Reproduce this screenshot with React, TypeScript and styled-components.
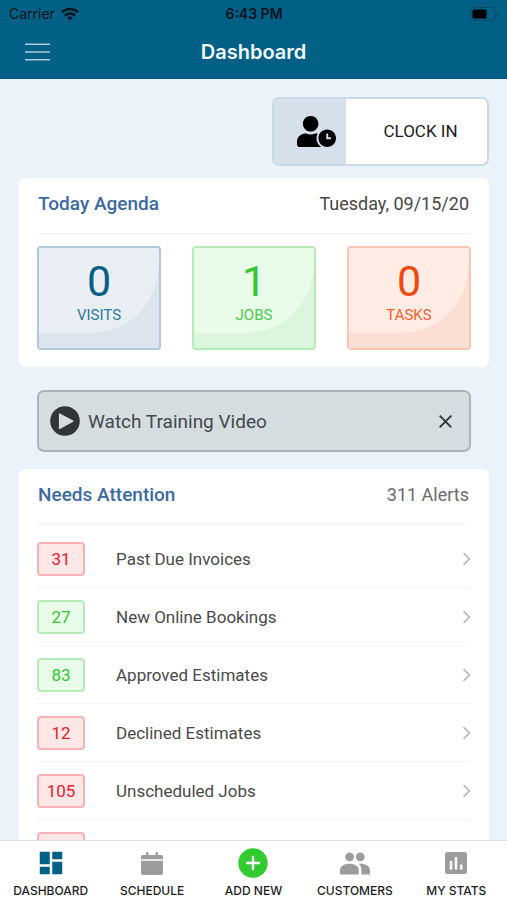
import React from "react";
import styled, { createGlobalStyle, css } from "styled-components";
import { FaUserClock } from "react-icons/fa";
import { MdDashboard } from "react-icons/md";

const GlobalStyle = createGlobalStyle`
  *, *::before, *::after { box-sizing: border-box; }
  body { margin: 0; background: #eaf3fa; font-family: Roboto, sans-serif; color: #444; }
  button { font: inherit; color: inherit; padding: 0; border: 0; background: none; cursor: pointer; }
  a { color: inherit; text-decoration: none; }
  h1, h2, p, ul { margin: 0; padding: 0; }
  svg { display: block; flex: none; }
`;

type Tone = "blue" | "green" | "orange" | "red";

const tones: Record<Tone, { ink: string; label: string; fill: string; shade: string; line: string }> = {
  blue: { ink: "#045f87", label: "#2c7898", fill: "#eaeff6", shade: "#dce4ed", line: "#b0c9d9" },
  green: { ink: "#32c832", label: "#4bcb4f", fill: "#e9fbe9", shade: "#dcf6dd", line: "#b6ebb8" },
  orange: { ink: "#f04a0c", label: "#f3632f", fill: "#feece5", shade: "#fcdfd4", line: "#fac6b2" },
  red: { ink: "#e8202a", label: "#e8202a", fill: "#fde7e7", shade: "#fbdada", line: "#f8b2b5" },
};

const Screen = styled.div`
  height: 100vh;
  display: flex;
  flex-direction: column;
`;

const TopBar = styled.header`
  flex: none;
  background: #025f86;
  border-bottom: 1px solid #01557a;
  font-family: Inter, sans-serif;
`;

const StatusBar = styled.div`
  display: grid;
  grid-template-columns: 1fr auto 1fr;
  align-items: center;
  height: 27px;
  padding: 0 8px 0 9px;
  font-size: 14px;
  color: #04141c;
`;

const Carrier = styled.div`
  display: flex;
  align-items: center;
  gap: 6px;
`;

const Clock = styled.div`
  font-weight: 600;
`;

const Battery = styled.div`
  justify-self: end;
`;

const TitleBar = styled.div`
  display: grid;
  grid-template-columns: 1fr auto 1fr;
  align-items: center;
  height: 51px;
  padding: 0 25px 2px;
`;

const MenuButton = styled.button`
  justify-self: start;
`;

const Title = styled.h1`
  font-size: 20px;
  line-height: 24px;
  font-weight: 600;
  color: #f2f8fb;
`;

const Content = styled.main`
  flex: 1;
  min-height: 0;
  overflow: hidden;
  padding: 18px 18px 0 19px;
`;

const ClockInButton = styled.button`
  display: flex;
  align-items: stretch;
  width: 217px;
  height: 69px;
  margin: 0 0 12px auto;
  border: 2px solid #c9d9e7;
  border-radius: 7px;
  background: #fff;
  overflow: hidden;
  font-size: 17px;
  color: #1c1c1c;
`;

const ClockInIcon = styled.span`
  display: flex;
  align-items: center;
  justify-content: center;
  width: 72px;
  padding-left: 12px;
  background: #d6e0ea;
  color: #000;
`;

const ClockInLabel = styled.span`
  flex: 1;
  align-self: center;
  padding: 0 0 2px 8px;
`;

const Card = styled.section`
  padding: 0 18px;
  background: #fff;
  border-radius: 6px;
`;

const CardHeader = styled.div`
  display: flex;
  align-items: center;
  justify-content: space-between;
  height: 56px;
  padding: 0 2px 4px 1px;
  border-bottom: 1px solid #f1f4f6;
`;

const CardTitle = styled.h2`
  font-size: 19px;
  line-height: 24px;
  font-weight: 500;
  color: #3b6ba0;
`;

const CardNote = styled.p<{ $strong?: boolean }>`
  font-size: 18px;
  line-height: 24px;
  color: ${(p) => (p.$strong ? "#474747" : "#6b6b6b")};
`;

const Tiles = styled.div`
  display: grid;
  grid-template-columns: repeat(3, 1fr);
  gap: 31px;
  padding: 12px 0 17px;
`;

const toneBox = css<{ $tone: Tone }>`
  color: ${(p) => tones[p.$tone].ink};
  background: ${(p) => tones[p.$tone].fill};
  border: 2px solid ${(p) => tones[p.$tone].line};
`;

const Tile = styled.button<{ $tone: Tone }>`
  ${toneBox}
  position: relative;
  display: flex;
  flex-direction: column;
  align-items: center;
  height: 104px;
  padding-top: 9px;
  border-radius: 4px;
  overflow: hidden;
`;

const TileShade = styled.svg`
  position: absolute;
  inset: 0;
  width: 100%;
  height: 100%;
`;

const TileCount = styled.span`
  position: relative;
  font-size: 43px;
  line-height: 48px;
`;

const TileLabel = styled.span<{ $tone: Tone }>`
  position: relative;
  font-size: 15px;
  line-height: 20px;
  color: ${(p) => tones[p.$tone].label};
`;

const Banner = styled.div`
  display: flex;
  align-items: center;
  justify-content: space-between;
  height: 62px;
  margin: 23px 18px 17px;
  padding: 0 17px 0 11px;
  background: #d6dde0;
  border: 2px solid #abb4b7;
  border-radius: 7px;
`;

const WatchButton = styled.button`
  display: flex;
  align-items: center;
  gap: 8px;
  font-size: 19px;
  color: #43484b;
`;

const AlertList = styled.ul`
  list-style: none;
  padding-top: 5px;
`;

const AlertItem = styled.li`
  border-bottom: 1px solid #f4f6f7;
`;

const AlertLink = styled.a`
  display: flex;
  align-items: center;
  height: 57px;
  font-size: 17px;
`;

const Badge = styled.span<{ $tone: Tone }>`
  ${toneBox}
  display: flex;
  align-items: center;
  justify-content: center;
  width: 48px;
  height: 34px;
  margin-right: 31px;
  border-radius: 4px;
`;

const AlertName = styled.span`
  flex: 1;
  color: #4a4a4a;
`;

const TabBar = styled.nav`
  flex: none;
  display: grid;
  grid-template-columns: repeat(5, 1fr);
  height: 60px;
  border-top: 1px solid #d9dfe3;
  background: #fff;
  font-family: Inter, sans-serif;
`;

const Tab = styled.a<{ $tint: string }>`
  display: flex;
  flex-direction: column;
  align-items: center;
  padding-top: 7px;
  gap: 5px;
  color: ${(p) => p.$tint};
`;

const TabIcon = styled.span`
  display: flex;
  align-items: center;
  justify-content: center;
  height: 30px;
`;

const TabLabel = styled.span`
  font-size: 12px;
  line-height: 16px;
  font-weight: 500;
  color: #1d1d1d;
  white-space: nowrap;
`;

const WifiIcon = () => (
  <svg width="18" height="14" viewBox="0 0 18 14" fill="none" stroke="#04141c" strokeWidth="2.5" aria-hidden="true">
    <path d="M1 5.2a11.6 11.6 0 0 1 16 0" />
    <path d="M4 8.5a7.3 7.3 0 0 1 10 0" />
    <path d="M9 13.5 6.3 10.8a4 4 0 0 1 5.4 0Z" fill="#04141c" stroke="none" />
  </svg>
);

const BatteryIcon = () => (
  <svg width="29" height="14" viewBox="0 0 29 14" aria-hidden="true">
    <rect x="0.5" y="0.5" width="25" height="13" rx="4" fill="none" stroke="#0d4a66" />
    <rect x="2.5" y="2.5" width="14" height="9" rx="1.5" fill="#000" />
    <path d="M27 4.7c2 .6 2 4 0 4.6Z" fill="#0d4a66" />
  </svg>
);

const MenuIcon = () => (
  <svg width="25" height="18" viewBox="0 0 25 18" stroke="#a9cbdb" strokeWidth="1.6" aria-hidden="true">
    <path d="M0 1.3h25M0 9h25M0 16.7h25" />
  </svg>
);

const PlayIcon = () => (
  <svg width="30" height="30" viewBox="0 0 30 30" aria-hidden="true">
    <circle cx="15" cy="15" r="14.8" fill="#303539" />
    <path d="M9.6 8v14.4L22.8 15.2Z" fill="#d6dde0" stroke="#d6dde0" strokeWidth="1.4" strokeLinejoin="round" />
  </svg>
);

const CloseIcon = () => (
  <svg width="13" height="13" viewBox="0 0 13 13" stroke="#303539" strokeWidth="1.9" aria-hidden="true">
    <path d="m.7.7 11.6 11.6M12.3.7.7 12.3" />
  </svg>
);

const ChevronIcon = () => (
  <svg width="9" height="14" viewBox="0 0 9 14" fill="none" stroke="#b8b8b8" strokeWidth="1.7" aria-hidden="true">
    <path d="m1.5 1.200 5.800 5.800-5.800 5.800" />
  </svg>
);

const CalendarIcon = () => (
  <svg width="22" height="23" viewBox="0 0 22 23" fill="currentColor" aria-hidden="true">
    <path d="M0 7.200V5a2 2 0 0 1 2-2h3V1.2a1.2 1.2 0 0 1 2.4 0V3h7.2V1.2a1.2 1.2 0 0 1 2.4 0V3h3a2 2 0 0 1 2 2v2.200Z" />
    <path d="M0 8.800h22V21a2 2 0 0 1-2 2H2a2 2 0 0 1-2-2Z" />
  </svg>
);

const AddIcon = () => (
  <svg width="30" height="30" viewBox="0 0 30 30" aria-hidden="true">
    <circle cx="15" cy="15" r="14.7" fill="#32cb32" />
    <path d="M15 9v12M9 15h12" stroke="#fff" strokeWidth="2.4" strokeLinecap="round" />
  </svg>
);

const PeopleIcon = () => (
  <svg width="30" height="23" viewBox="0 0 30 23" fill="currentColor" aria-hidden="true">
    <circle cx="9.6" cy="4.8" r="4.4" />
    <circle cx="20.2" cy="4.8" r="4.4" />
    <path d="M0 22.5v-4.300C0 13.500 5.600 11.800 9.400 11.800s9.400 1.700 9.400 6.400v4.300Z" />
    <path d="M19 11.900c4.500-.3 11 1.500 11 6.300v4.300h-8.600v-4.300c0-2.800-.9-4.900-2.400-6.300Z" />
  </svg>
);

const StatsIcon = () => (
  <svg width="22" height="22" viewBox="0 0 22 22" aria-hidden="true">
    <rect width="22" height="22" rx="2.500" fill="currentColor" />
    <path d="M6 17.500V9M11 17.500V5M16.200 17.500v-5" stroke="#fff" strokeWidth="2.500" />
  </svg>
);

const agenda: { count: number; label: string; tone: Tone }[] = [
  { count: 0, label: "VISITS", tone: "blue" },
  { count: 1, label: "JOBS", tone: "green" },
  { count: 0, label: "TASKS", tone: "orange" },
];

const alerts: { count: string; name: string; tone: Tone }[] = [
  { count: "31", name: "Past Due Invoices", tone: "red" },
  { count: "27", name: "New Online Bookings", tone: "green" },
  { count: "83", name: "Approved Estimates", tone: "green" },
  { count: "12", name: "Declined Estimates", tone: "red" },
  { count: "105", name: "Unscheduled Jobs", tone: "red" },
  { count: "", name: "", tone: "red" },
];

const tabs = [
  { label: "DASHBOARD", tint: "#025f86", icon: <MdDashboard size={30} /> },
  { label: "SCHEDULE", tint: "#9c9c9c", icon: <CalendarIcon /> },
  { label: "ADD NEW", tint: "#32cb32", icon: <AddIcon /> },
  { label: "CUSTOMERS", tint: "#9c9c9c", icon: <PeopleIcon /> },
  { label: "MY STATS", tint: "#9c9c9c", icon: <StatsIcon /> },
];

export default function App() {
  return (
    <Screen>
      <GlobalStyle />
      <TopBar>
        <StatusBar>
          <Carrier>
            Carrier <WifiIcon />
          </Carrier>
          <Clock>6:43 PM</Clock>
          <Battery>
            <BatteryIcon />
          </Battery>
        </StatusBar>
        <TitleBar>
          <MenuButton aria-label="Menu">
            <MenuIcon />
          </MenuButton>
          <Title>Dashboard</Title>
        </TitleBar>
      </TopBar>

      <Content>
        <ClockInButton>
          <ClockInIcon>
            <FaUserClock size={39} />
          </ClockInIcon>
          <ClockInLabel>CLOCK IN</ClockInLabel>
        </ClockInButton>

        <Card>
          <CardHeader>
            <CardTitle>Today Agenda</CardTitle>
            <CardNote $strong>Tuesday, 09/15/20</CardNote>
          </CardHeader>
          <Tiles>
            {agenda.map((item) => (
              <Tile key={item.label} $tone={item.tone}>
                <TileShade viewBox="0 0 120 100" preserveAspectRatio="none" aria-hidden="true">
                  <path d="M120 18C117 56 92 85 48 85H0v15h120Z" fill={tones[item.tone].shade} />
                </TileShade>
                <TileCount>{item.count}</TileCount>
                <TileLabel $tone={item.tone}>{item.label}</TileLabel>
              </Tile>
            ))}
          </Tiles>
        </Card>

        <Banner>
          <WatchButton>
            <PlayIcon />
            Watch Training Video
          </WatchButton>
          <button aria-label="Dismiss">
            <CloseIcon />
          </button>
        </Banner>

        <Card>
          <CardHeader>
            <CardTitle>Needs Attention</CardTitle>
            <CardNote>311 Alerts</CardNote>
          </CardHeader>
          <AlertList>
            {alerts.map((alert, i) => (
              <AlertItem key={i}>
                <AlertLink href="#">
                  <Badge $tone={alert.tone}>{alert.count}</Badge>
                  <AlertName>{alert.name}</AlertName>
                  <ChevronIcon />
                </AlertLink>
              </AlertItem>
            ))}
          </AlertList>
        </Card>
      </Content>

      <TabBar>
        {tabs.map((tab) => (
          <Tab key={tab.label} href="#" $tint={tab.tint}>
            <TabIcon>{tab.icon}</TabIcon>
            <TabLabel>{tab.label}</TabLabel>
          </Tab>
        ))}
      </TabBar>
    </Screen>
  );
}
